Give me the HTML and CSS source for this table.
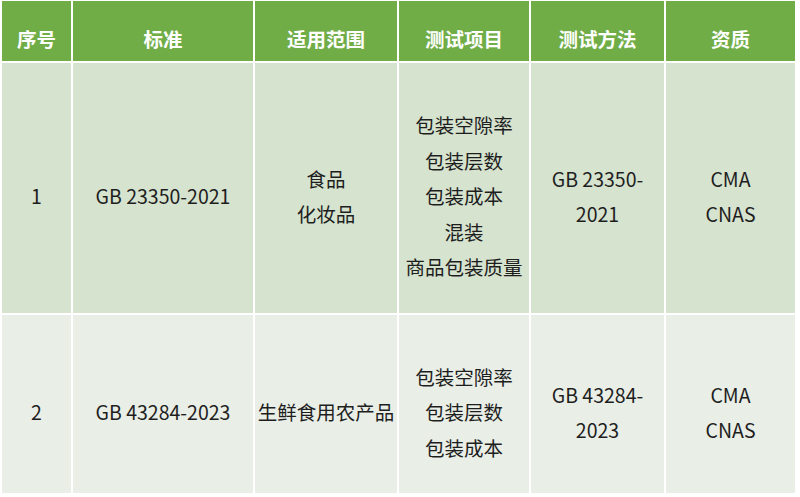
FILE: index.html
```html
<!DOCTYPE html>
<html lang="zh">
<head>
<meta charset="utf-8">
<link rel="stylesheet" href="styles.css">
</head>
<body>
<table class="std-table">
  <colgroup>
    <col class="c-no">
    <col class="c-std">
    <col class="c-scope">
    <col class="c-item">
    <col class="c-method">
    <col class="c-qual">
  </colgroup>
  <thead>
    <tr class="head-row">
      <th>序号</th>
      <th>标准</th>
      <th>适用范围</th>
      <th>测试项目</th>
      <th>测试方法</th>
      <th>资质</th>
    </tr>
  </thead>
  <tbody>
    <tr class="row-a">
      <td>1</td>
      <td>GB 23350-2021</td>
      <td class="scope">食品<br>化妆品</td>
      <td>包装空隙率<br>包装层数<br>包装成本<br>混装<br>商品包装质量</td>
      <td>GB 23350-2021</td>
      <td>CMA<br>CNAS</td>
    </tr>
    <tr class="row-b">
      <td>2</td>
      <td>GB 43284-2023</td>
      <td class="scope">生鲜食用农产品</td>
      <td>包装空隙率<br>包装层数<br>包装成本</td>
      <td>GB 43284-2023</td>
      <td>CMA<br>CNAS</td>
    </tr>
  </tbody>
</table>
</body>
</html>
```

FILE: styles.css
```css
html, body {
  margin: 0;
  padding: 0;
  background: #ffffff;
}

body {
  font-family: "Noto Sans CJK SC", "Noto Sans", sans-serif;
  color: #1e1e1e;
}

.std-table {
  table-layout: fixed;
  width: 797px;
  border-collapse: separate;
  border-spacing: 2px;
  margin-top: -1px;
}

.c-no { width: 69px; }
.c-std { width: 180px; }
.c-scope { width: 142px; }
.c-item { width: 130px; }
.c-method { width: 133px; }
.c-qual { width: 129px; }

.std-table th,
.std-table td {
  padding: 16px 3px 0;
  text-align: center;
  vertical-align: middle;
  font-size: 19.5px;
  line-height: 35.5px;
}

.std-table td.scope {
  padding-left: 0;
  padding-right: 0;
  white-space: nowrap;
}

.std-table th {
  background: #70ad47;
  color: #ffffff;
  font-weight: 700;
  height: 44px;
  padding-top: 16px;
  line-height: 28px;
}

.row-a td {
  background: #d6e3cf;
  height: 234px;
}

.row-b td {
  background: #e9eee6;
  height: 162px;
}
```
